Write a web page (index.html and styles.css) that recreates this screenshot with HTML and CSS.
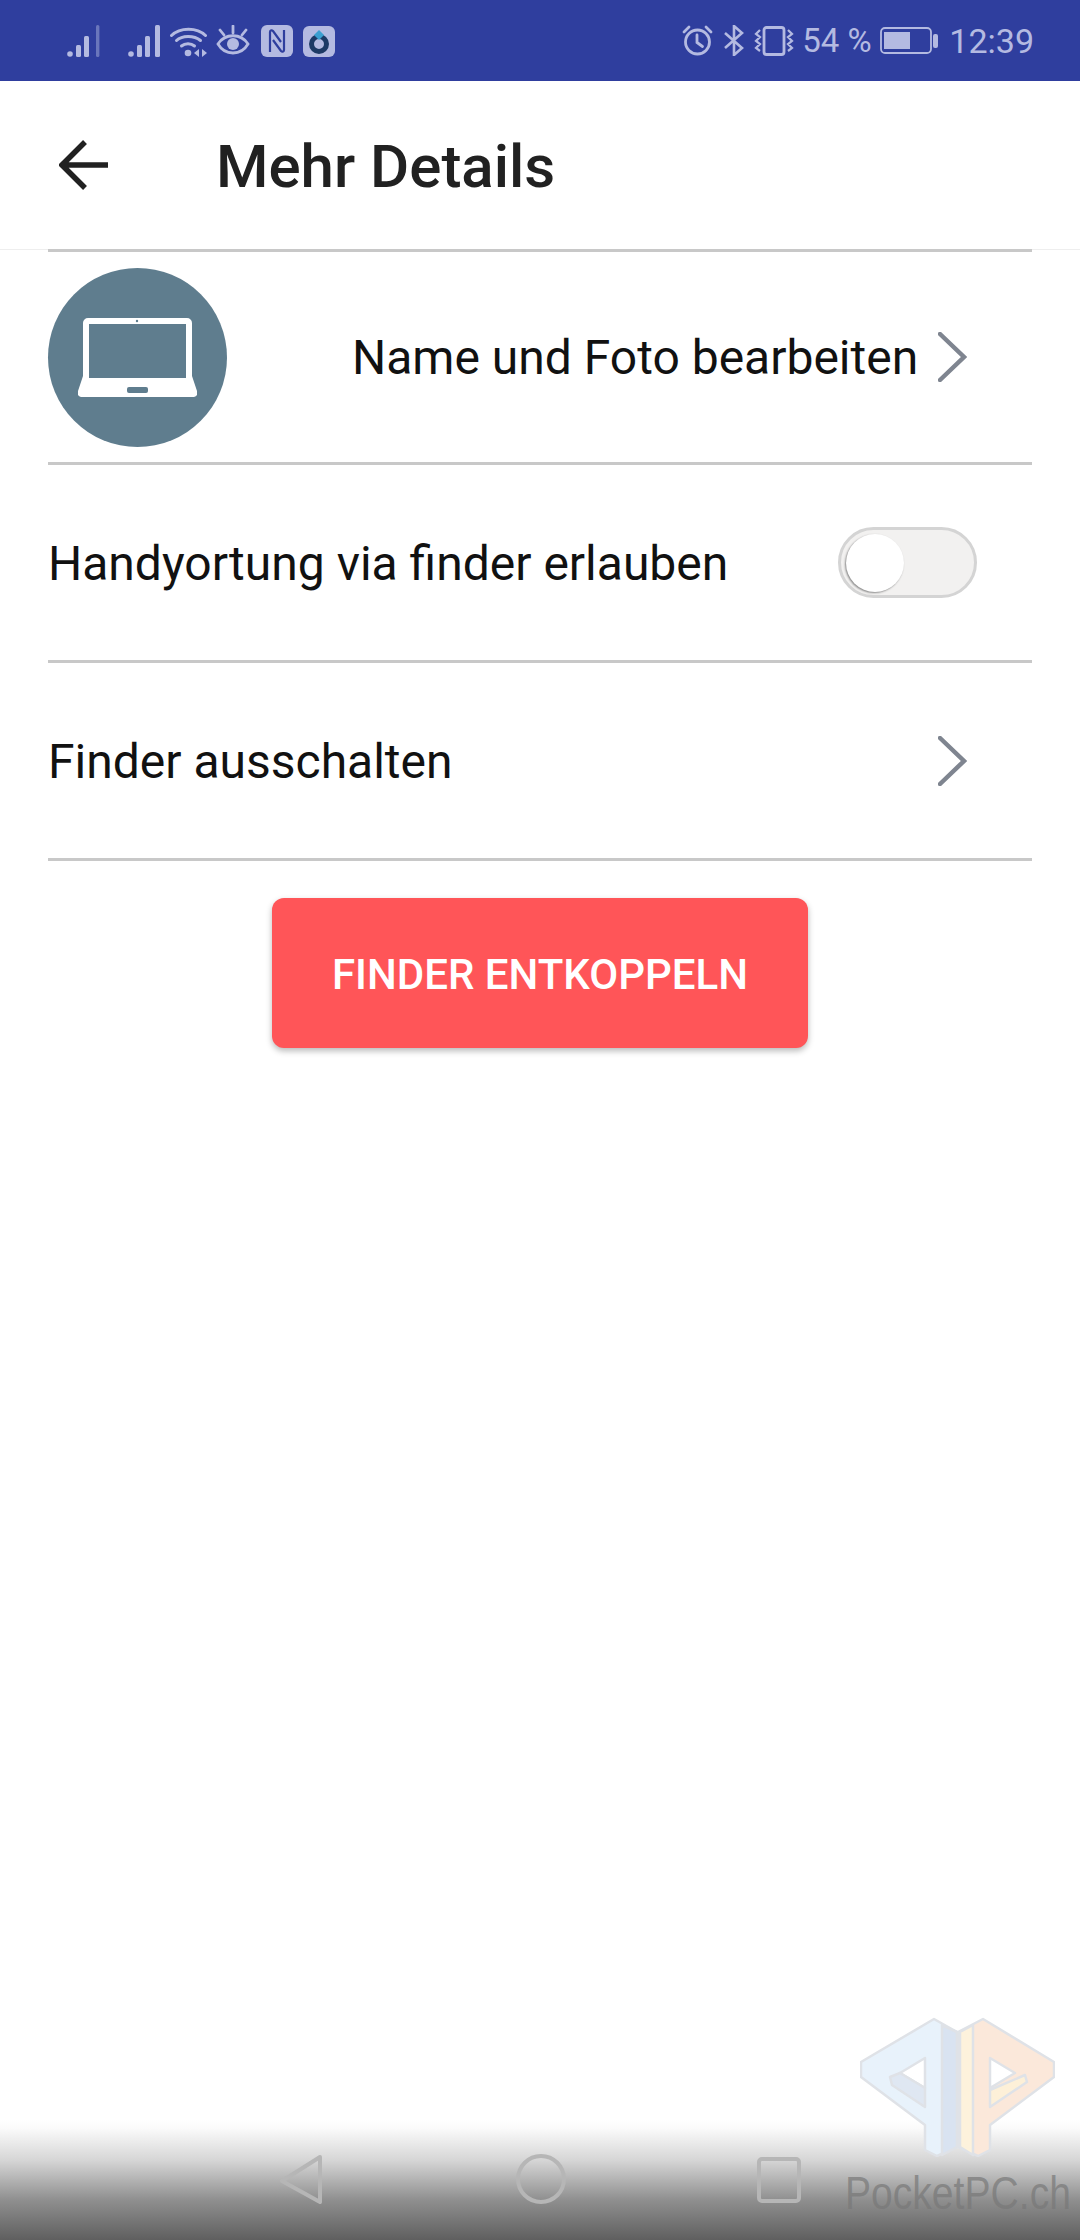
FILE: index.html
```html
<!DOCTYPE html>
<html lang="de">
<head>
<meta charset="utf-8">
<title>Mehr Details</title>
<link rel="stylesheet" href="styles.css">
</head>
<body>
<div class="page">
  <div class="status">
    <div class="status-left">
      <svg class="ic sig first" viewBox="0 0 33 32"><g fill="currentColor"><circle cx="3" cy="29" r="2.8"/><rect x="9" y="20" width="5" height="12" rx="1.5"/><rect x="17" y="11" width="5" height="21" rx="1.500"/><rect x="29" y="0" width="3.400" height="32" rx="1.500" opacity=".45"/></g></svg>
      <svg class="ic sig" viewBox="0 0 33 32"><g fill="currentColor"><circle cx="3" cy="29" r="2.8"/><rect x="9" y="20" width="5" height="12" rx="1.500"/><rect x="17" y="11" width="5" height="21" rx="1.500"/><rect x="27" y="0" width="5" height="32" rx="1.500"/></g></svg>
      <svg class="ic wifi" viewBox="0 0 38 32"><g fill="none" stroke="currentColor" stroke-width="3" stroke-linecap="round"><path d="M1.500 10.500C10 2 27 2 35.500 10.500"/><path d="M6.500 15.500C12 10 24 10 30.500 15.500"/><path d="M11.500 21C15 18 21 18 24.500 21"/></g><circle cx="18" cy="28" r="3.300" fill="currentColor"/><path d="M29 24v8l-5-4zM32 24v8l5-4z" fill="currentColor"/></svg>
      <svg class="ic eye" viewBox="0 0 34 32"><g fill="none" stroke="currentColor" stroke-width="2.800" stroke-linecap="round"><path d="M2 19C9 8 25 8 32 19 25 31 9 31 2 19Z"/><path d="M17 8V1M8 10 4 5M26 10l4-5"/></g><circle cx="17" cy="19" r="6" fill="currentColor"/></svg>
      <svg class="ic nfc" viewBox="0 0 32 32"><rect width="32" height="32" rx="6" fill="currentColor"/><path d="M9 27V7c0-2 2-2 3-1l8 11M23 5v20c0 2-2 2-3 1l-8-11" fill="none" stroke="#2f3e9e" stroke-width="2.200"/></svg>
      <svg class="ic app" viewBox="0 0 32 32"><rect y="1" width="32" height="31" rx="6" fill="currentColor"/><circle cx="16" cy="19" r="7.500" fill="none" stroke="#1d3a66" stroke-width="5"/><path d="M16 5l5 5-5 5-5-5z" fill="#3b9fd0"/></svg>
    </div>
    <div class="status-right">
      <svg class="ic alarm" viewBox="0 0 31 31"><g fill="none" stroke="currentColor" stroke-width="2.800" stroke-linecap="round"><circle cx="15.500" cy="17" r="12"/><path d="M15 10v7.500l5.500 4M2 7l5-5M29 7l-5-5"/></g></svg>
      <svg class="ic bt" viewBox="0 0 20 31"><path d="M1 8l17 15-8 7V1l8 7L1 23" fill="none" stroke="currentColor" stroke-width="2.600"/></svg>
      <svg class="ic vib" viewBox="0 0 40 30"><rect x="10" y="1.500" width="20" height="27" rx="2.500" fill="none" stroke="currentColor" stroke-width="2.800"/><path d="M6 4 2 8l4 3-4 4 4 3-4 4 4 3M34 4l4 4-4 3 4 4-4 3 4 4-4 3" fill="none" stroke="currentColor" stroke-width="2.200"/></svg>
      <span class="pct">54 %</span>
      <svg class="ic batt" viewBox="0 0 58 27"><rect x="1" y="1" width="50" height="25" rx="4" fill="none" stroke="currentColor" stroke-width="1.800"/><rect x="4" y="5" width="26" height="17" fill="currentColor"/><rect x="53" y="7" width="5" height="14" rx="2" fill="currentColor"/></svg>
      <span class="time">12:39</span>
    </div>
  </div>

  <header class="appbar">
    <svg class="back" viewBox="0 0 50 50"><path d="M49 25H4M26 2 3 25l23 23" fill="none" stroke="#212121" stroke-width="5.500"/></svg>
    <h1 class="title">Mehr Details</h1>
  </header>

  <main class="content">
    <div class="row row-device">
      <div class="avatar">
        <svg class="laptop" viewBox="0 0 119 79"><path d="M5 5a5 5 0 0 1 5-5h99a5 5 0 0 1 5 5v53l5 15a4 4 0 0 1-3 6H3a4 4 0 0 1-3-6l5-15z" fill="#fff"/><rect x="11" y="6" width="97" height="54" fill="#5f7d8e"/><circle cx="59" cy="3" r="1.200" fill="#5f7d8e"/><rect x="49" y="69" width="21" height="6" rx="2" fill="#5f7d8e"/></svg>
      </div>
      <span class="label label-device">Name und Foto bearbeiten</span>
      <svg class="chev" viewBox="0 0 29 50"><path d="M2 2 26 25 2 48" fill="none" stroke="#7f8590" stroke-width="4.500" stroke-linecap="round"/></svg>
    </div>
    <div class="row row-toggle">
      <span class="label">Handyortung via finder erlauben</span>
      <div class="switch"><div class="knob"></div></div>
    </div>
    <div class="row row-off">
      <span class="label">Finder ausschalten</span>
      <svg class="chev" viewBox="0 0 29 50"><path d="M2 2 26 25 2 48" fill="none" stroke="#7f8590" stroke-width="4.500" stroke-linecap="round"/></svg>
    </div>
    <button class="cta">FINDER ENTKOPPELN</button>
  </main>

  <nav class="navbar">
    <svg class="nav-ic nav-back" viewBox="0 0 44 50"><path d="M41 3 3 27l38 21z" fill="none" stroke="currentColor" stroke-width="4" stroke-linejoin="round"/></svg>
    <svg class="nav-ic nav-home" viewBox="0 0 50 50"><circle cx="25" cy="25" r="23" fill="none" stroke="currentColor" stroke-width="4"/></svg>
    <svg class="nav-ic nav-recent" viewBox="0 0 44 46"><rect x="2" y="2" width="40" height="42" rx="3" fill="none" stroke="currentColor" stroke-width="4"/></svg>
  </nav>

  <div class="watermark">
    <svg class="wm-logo" viewBox="0 0 195 140">
      <g stroke="#dfe2e7" stroke-width="2.500" stroke-linejoin="round">
        <path d="M74 2 97 15V130L77 139 65 133V108L1 60V45ZM65 41 40 56 65 71Z" fill="#e8f2fb" fill-rule="evenodd"/>
        <path d="M82 8 97 15V130L82 138Z" fill="#d9e3f1"/>
        <path d="M30 60 40 56 65 71V90L32 68Z" fill="#dfe7f2"/>
        <path d="M123 2 98 15V130L118 139 130 133V108L194 60V45ZM130 41 155 56 130 71Z" fill="#fbe8da" fill-rule="evenodd"/>
        <path d="M113 8 100 15V130L113 138Z" fill="#fdf2dc"/>
        <path d="M130 73 165 58 167 65 130 90Z" fill="#fdf0d8"/>
      </g>
    </svg>
    <span class="wm-text">PocketPC.ch</span>
  </div>
</div>
</body>
</html>
```

FILE: styles.css
```css
* { box-sizing: border-box; }
html, body { margin: 0; padding: 0; }
body { background: #fff; font-family: Roboto, "Liberation Sans", sans-serif; }
.page { position: relative; width: 1080px; height: 2240px; display: flex; flex-direction: column; overflow: hidden; background: #fff; }

.status { height: 81px; flex: none; background: #2f3e9e; color: #b4bae1; display: flex; align-items: center; justify-content: space-between; padding: 0 46px 0 67px; }
.status-left, .status-right { display: flex; align-items: center; }
.ic { display: block; flex: none; height: 32px; }
.sig { width: 33px; margin-right: 9px; }
.sig.first { margin-right: 28px; }
.wifi { width: 38px; margin-right: 8px; }
.eye { width: 34px; margin-right: 11px; }
.nfc { width: 32px; margin-right: 10px; }
.app { width: 32px; }
.alarm { width: 31px; height: 31px; margin-right: 11px; }
.bt { width: 20px; height: 31px; margin-right: 10px; }
.vib { width: 40px; height: 30px; margin-right: 8px; }
.pct { font-size: 33px; width: 78px; line-height: 40px; }
.batt { width: 58px; height: 27px; margin-right: 11px; }
.time { font-size: 34px; line-height: 40px; }

.appbar { height: 169px; flex: none; display: flex; align-items: center; padding-left: 59px; border-bottom: 1px solid #eee; }
.back { width: 50px; height: 50px; margin-right: 107px; flex: none; }
.title { margin: 3px 0 0; font-size: 60px; font-weight: 500; color: #212121; line-height: 70px; }

.content { flex: 1; display: flex; flex-direction: column; padding: 0 48px; margin-top: -1px; }
.row { display: flex; align-items: center; border-top: 3px solid #c8c8c8; }
.row-device { height: 213px; }
.row-toggle { height: 198px; justify-content: space-between; padding-right: 55px; }
.row-off { height: 201px; justify-content: space-between; border-bottom: 3px solid #c8c8c8; }
.label { font-size: 48px; color: #111; line-height: 60px; margin-top: 3px; }
.avatar { width: 179px; height: 179px; border-radius: 50%; background: #5f7d8e; display: flex; align-items: center; justify-content: center; flex: none; margin-right: 125px; }
.laptop { width: 119px; height: 79px; display: block; }
.label-device { margin: 2px 20px 0 0; }
.chev { width: 29px; height: 50px; flex: none; }
.row-off .chev { margin-right: 65px; }
.switch { width: 139px; height: 71px; border-radius: 36px; background: #f2f1f0; border: 3px solid #d4d4d4; position: relative; }
.knob { position: absolute; left: 5px; top: 4px; width: 58px; height: 58px; border-radius: 50%; background: #fff; box-shadow: -1px 1px 2px #8a8a8a; }
.cta { align-self: center; margin-top: 37px; width: 536px; height: 150px; border: 0; border-radius: 12px; background: #ff5558; color: #fff; font-family: inherit; font-size: 42px; font-weight: 500; box-shadow: 0 3px 6px rgba(0,0,0,.28); padding: 2px 0 0; }

.navbar { height: 120px; flex: none; color: #b6b6b6; display: flex; align-items: flex-start; padding: 34px 0 0 279px; background: linear-gradient(to bottom, #fff 0, #fbfbfb 8px, #d6d6d6 40px, #8f8f8f 80px, #5f5f5f 120px); }
.nav-ic { display: block; flex: none; }
.nav-back { width: 44px; height: 50px; margin-right: 193px; }
.nav-home { width: 50px; height: 50px; margin-right: 191px; }
.nav-recent { width: 44px; height: 46px; margin-top: 3px; }

.watermark { position: absolute; left: 845px; top: 2017px; width: 226px; display: flex; flex-direction: column; align-items: center; }
.wm-logo { width: 195px; height: 140px; display: block; margin-left: -2px; }
.wm-text { font-family: "Liberation Sans", Arial, sans-serif; font-size: 46px; line-height: 46px; color: rgba(120,120,120,.7); margin-top: 13px; white-space: nowrap; transform: scaleX(.85); }
```
